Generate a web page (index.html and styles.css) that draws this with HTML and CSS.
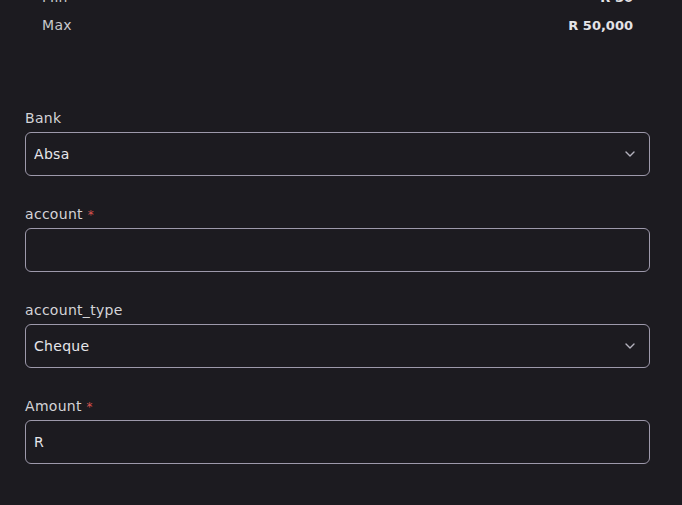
FILE: index.html
```html
<!DOCTYPE html>
<html lang="en">
<head>
  <meta charset="UTF-8">
  <meta name="viewport" content="width=device-width, initial-scale=1.0">
  <title>Withdraw</title>
  <link rel="stylesheet" href="styles.css">
</head>
<body>
  <div class="page">
    <!-- Limits -->
    <div class="limits">
      <div class="limit-row">
        <span>Min</span>
        <strong>R 50</strong>
      </div>
      <div class="limit-row">
        <span>Max</span>
        <strong>R 50,000</strong>
      </div>
    </div>

    <form class="withdraw-form">
      <!-- Bank -->
      <div class="field">
        <label for="bank">Bank</label>
        <div class="select-wrap">
          <select id="bank">
            <option>Absa</option>
            <option>Capitec</option>
            <option>FNB</option>
            <option>Nedbank</option>
            <option>Standard Bank</option>
          </select>
          <svg class="chevron" width="12" height="12" viewBox="0 0 12 12"><path d="M2 4l4 4 4-4" fill="none" stroke="currentColor" stroke-width="1.4" stroke-linecap="round" stroke-linejoin="round"/></svg>
        </div>
      </div>
      <!-- Account -->
      <div class="field">
        <label for="account">account <span class="req">*</span></label>
        <input type="text" id="account">
      </div>
      <!-- Account type -->
      <div class="field">
        <label for="account_type">account_type</label>
        <div class="select-wrap">
          <select id="account_type">
            <option>Cheque</option>
            <option>Savings</option>
          </select>
          <svg class="chevron" width="12" height="12" viewBox="0 0 12 12"><path d="M2 4l4 4 4-4" fill="none" stroke="currentColor" stroke-width="1.4" stroke-linecap="round" stroke-linejoin="round"/></svg>
        </div>
      </div>
      <!-- Amount -->
      <div class="field">
        <label for="amount">Amount <span class="req">*</span></label>
        <input type="text" id="amount" value="R">
      </div>
    </form>
  </div>
</body>
</html>
```

FILE: styles.css
```css
/* Reset */
body, form, label, input, select, span, strong {
  margin: 0;
  padding: 0;
  font-family: 'DejaVu Sans', sans-serif;
}

body {
  background-color: #1c1b20;
  color: #d4d4d8;
  font-size: 14px;
  letter-spacing: 0.3px;
  overflow: hidden;
}

.page {
  padding: 0 32px 0 25px;
  margin-top: -17px;
}

/* Limits */
.limits {
  padding: 0 17px;
}

.limit-row {
  display: flex;
  justify-content: space-between;
  align-items: center;
  height: 28px;
}

.limit-row span {
  color: #c8c8cc;
}

.limit-row strong {
  color: #e4e4e7;
  font-weight: bold;
  font-size: 13px;
  letter-spacing: 0;
}

/* Form */
.withdraw-form {
  margin-top: 69px;
}

.field {
  margin-bottom: 28px;
}

label {
  display: block;
  height: 20px;
  line-height: 20px;
  margin-bottom: 4px;
  color: #d4d4d8;
}

.req {
  color: #d9534f;
  font-size: 12px;
  line-height: 1;
}

input, select {
  width: 100%;
  height: 44px;
  padding: 0 8px;
  border: 1px solid #9d99ab;
  border-radius: 6px;
  background-color: #1c1b20;
  color: #e6e6ea;
  font-size: 14px;
  letter-spacing: 0.3px;
  box-sizing: border-box;
  outline: none;
}

select {
  appearance: none;
  -webkit-appearance: none;
}

.select-wrap {
  position: relative;
}

.chevron {
  position: absolute;
  right: 14px;
  top: 16px;
  color: #b4b2bd;
  pointer-events: none;
}
```
